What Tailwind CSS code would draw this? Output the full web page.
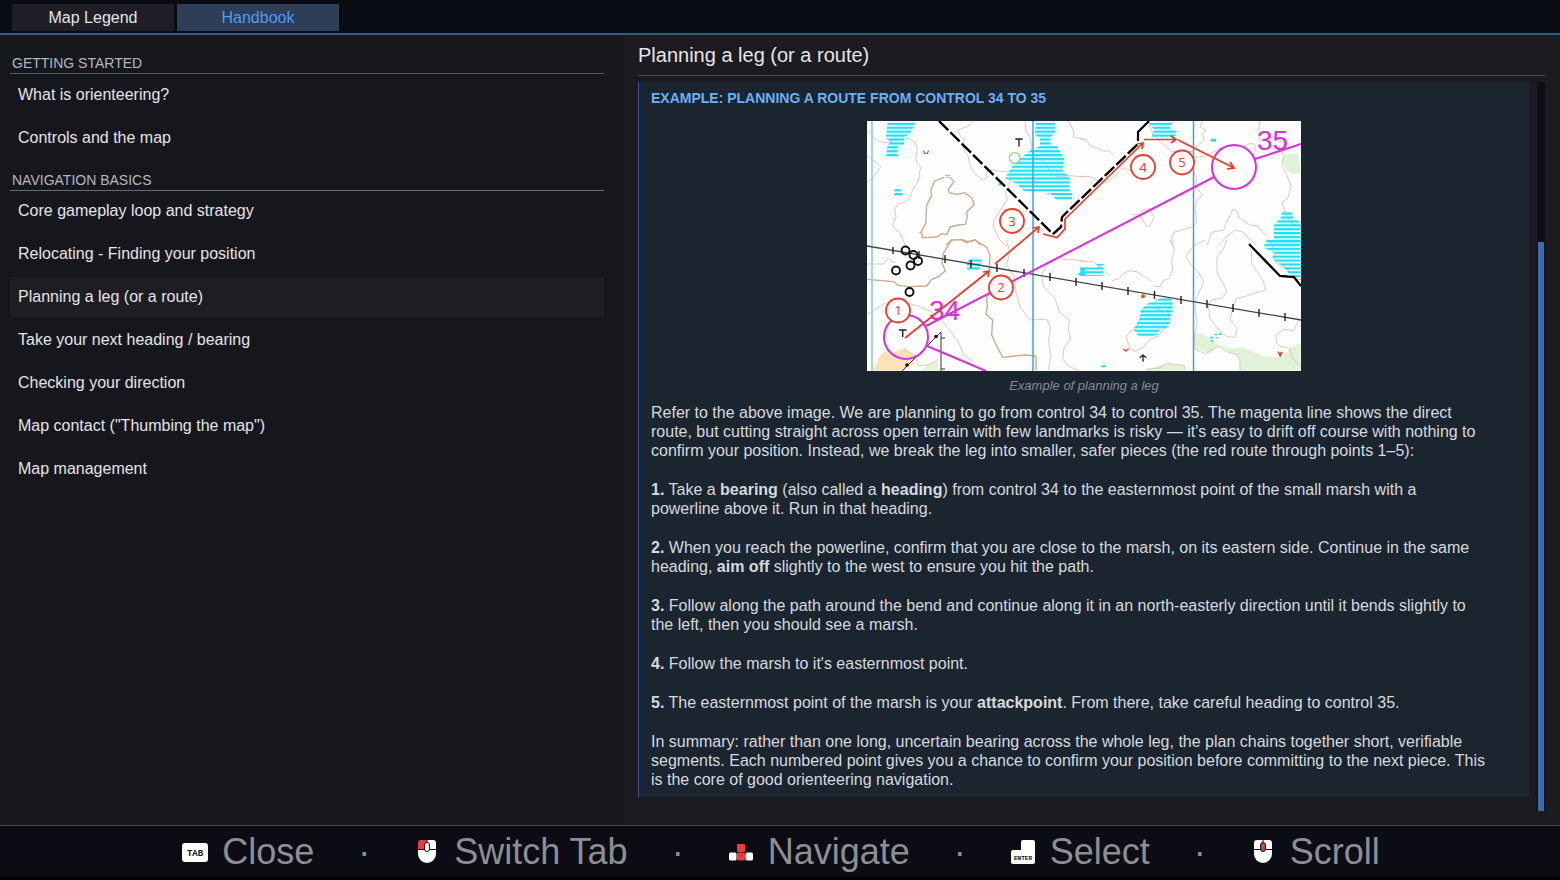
<!DOCTYPE html>
<html lang="en">
<head>
<meta charset="utf-8">
<meta name="viewport" content="width=device-width, initial-scale=1">
<title>Handbook</title>
<script src="https://cdn.jsdelivr.net/npm/@tailwindcss/browser@4"></script>
</head>
<body class="flex min-h-screen flex-col bg-[#16161b] font-['Liberation_Sans',Arial,sans-serif] text-base text-[#e4e4e7]">

<header class="border-b-2 border-[#2c5c8e] bg-[#0a0c14] px-3 pt-1 pb-[2px]">
  <nav class="flex gap-[3px]" aria-label="Sections">
    <button class="h-[27px] w-[162px] bg-[#1f1e27]">Map Legend</button>
    <button class="h-[27px] w-[162px] bg-[#2e3e56] text-[#4c9bf5]" aria-current="page">Handbook</button>
  </nav>
</header>

<main class="flex flex-1">
  <aside class="w-2/5 shrink-0 bg-[#16171c] pt-[18px] pr-5 pl-[10px]">
    <h2 class="border-b border-[#5b5b60] px-[2px] text-sm leading-5 text-[#b4b7bf]">GETTING STARTED</h2>
    <ul class="flex flex-col gap-[3px] pt-px">
      <li><button class="h-10 w-full px-2 text-left">What is orienteering?</button></li>
      <li><button class="h-10 w-full px-2 text-left">Controls and the map</button></li>
    </ul>
    <h2 class="mt-3 border-b border-[#6b6b70] px-[2px] text-sm leading-5 text-[#b4b7bf]">NAVIGATION BASICS</h2>
    <ul class="flex flex-col gap-[3px]">
      <li><button class="h-10 w-full px-2 text-left">Core gameplay loop and strategy</button></li>
      <li><button class="h-10 w-full px-2 text-left">Relocating - Finding your position</button></li>
      <li><button class="h-10 w-full bg-[#1d1d22] px-2 text-left" aria-current="true">Planning a leg (or a route)</button></li>
      <li><button class="h-10 w-full px-2 text-left">Take your next heading / bearing</button></li>
      <li><button class="h-10 w-full px-2 text-left">Checking your direction</button></li>
      <li><button class="h-10 w-full px-2 text-left">Map contact ("Thumbing the map")</button></li>
      <li><button class="h-10 w-full px-2 text-left">Map management</button></li>
    </ul>
  </aside>

  <section class="flex flex-1 flex-col bg-[#1c1b20] pr-[15px] pb-[14px] pl-[14px]">
    <h1 class="border-b border-[#4a4a4e] text-xl leading-10 text-[#e6e6e8]">Planning a leg (or a route)</h1>
    <div class="mt-[6px] flex flex-1 gap-2">
      <article class="mb-[14px] flex-1 border-l border-[#34589a] bg-[#1b2530] px-3 pt-[6px] pb-[7px]">
        <h2 class="text-sm leading-5 font-bold text-[#6cb0f5]">EXAMPLE: PLANNING A ROUTE FROM CONTROL 34 TO 35</h2>
        <figure class="mt-[13px] flex flex-col items-center">
          <svg class="w-[434px] max-w-full" viewBox="0 0 434 250" role="img" aria-label="Orienteering map with a route from control 34 to 35">
            <defs>
              <pattern id="marsh" width="12" height="11.7" patternUnits="userSpaceOnUse">
                <rect width="12" height="7" fill="#20e0f2"/>
              </pattern>
            </defs>
            <rect width="434" height="250" fill="#fefefe"/>
            <!-- terrain, north-west sheet -->
            <g transform="translate(-7 -6) scale(.333333)" fill="none" stroke-linejoin="round">
              <g stroke="#dccabb" stroke-width="3">
                <path d="M22 45L40 65 55 78 75 84 110 75 145 70 165 82 172 100 168 130 172 148 184 158 178 172 180 185 168 210 158 225 150 248 135 262 112 268 104 285 108 305 98 328 102 340 118 352 130 375 136 395"/>
                <path d="M22 120L62 155 38 190 22 205"/>
                <path d="M340 18L330 30 293 46 300 62 312 72 308 90 316 112 324 122 330 150 345 178 370 196 382 186 378 172 395 165 430 170 450 168 454 185 446 215 436 232 442 255 425 280 402 315 400 335 412 360 420 375 440 395"/>
                <path d="M495 18L498 50 512 70 515 110 525 125 545 135 560 150 575 175 590 186 630 182 675 186"/>
                <path d="M625 18L640 45 640 65 675 75"/>
              </g>
              <g stroke="#cba98a" stroke-width="4">
                <path d="M252 187L225 198 212 225 215 242 200 270 197 325 184 350 188 368 230 366 245 356 262 358 270 336 295 330 316 328 322 305 320 292 343 268 336 250 314 233 292 238 270 234 264 225 282 200 270 187"/>
                <path d="M258 390L275 375 308 374 322 380 345 375 362 390M178 352L186 352"/>
              </g>
              <path d="M254 181h18M256 187h14" stroke="#c9c4c0" stroke-width="4"/>
              <path fill="url(#marsh)" d="M83 22L165 22 162 36 155 44 150 58 132 66 132 90 112 95 114 128 78 128 82 92 90 80 78 68 80 45Z"/>
              <path fill="url(#marsh)" d="M104 222H120L130 243H102Z"/>
              <path fill="url(#marsh)" d="M528 20H586V54L572 66V92H590L612 130 610 170 630 185 628 222 636 236V256H590L572 236 492 228 468 205 434 190 460 150 508 108 540 94V72L524 58Z"/>
              <path fill="#20e0f2" d="M415 205h8v6h-8z"/>
              <path d="M190 107l4 8h8l4-8" stroke="#d5623e" stroke-width="4"/>
              <circle cx="464" cy="129" r="16" stroke="#86e070" stroke-width="4"/>
              <path d="M466 72H488M477 72V95" stroke="#222" stroke-width="4"/>
            </g>
            <!-- terrain, north-east sheet -->
            <g transform="translate(213 -6) scale(.333333)" fill="none" stroke-linejoin="round">
              <path fill="#e0f3da" d="M610 118L655 115 662 175 640 178 618 165 608 140Z"/>
              <g stroke="#dccabb" stroke-width="3">
                <path d="M0 70L18 74 30 92 50 98 75 110 88 105 100 118M0 184L30 185 55 198 80 202 100 188 112 176 125 160 160 168"/>
                <path d="M205 22L220 60 250 88 275 108 310 125 340 105 352 92 372 75 368 55 378 45 360 36 368 18M300 120L345 128 380 122 420 100 460 92 490 95 512 84 524 88 528 110"/>
                <path d="M540 18L535 50 540 78 562 68 590 66 600 80 612 82 606 105 610 125 606 150 620 180 634 215 622 252 605 260 618 300 634 325 650 330"/>
                <path d="M340 170L350 190 346 215 368 240 352 252 345 280 350 320 340 335 282 352 275 370 280 390"/>
                <path d="M155 300L185 296 188 285 210 280 222 308 212 330 200 334 190 318 182 304"/>
                <path d="M382 390L395 352 432 345 440 320 452 298 458 282 472 290 476 308 510 330 530 332 548 352 562 362M418 390L438 366 466 345 490 352 515 378 530 390"/>
              </g>
              <path fill="url(#marsh)" d="M205 22L278 22 270 40 290 48 284 66H215L222 44Z"/>
              <path fill="#20e0f2" d="M392 71h16v9h-16z"/>
              <path fill="url(#marsh)" d="M606 288H634L640 310 662 322V390H556L582 370V330L602 310Z"/>
            </g>
            <!-- terrain, south-west sheet -->
            <g transform="translate(-7 119) scale(.333333)" fill="none" stroke-linejoin="round">
              <path fill="#fce2b8" d="M40 392L60 345 84 330 105 335 140 320 144 335 168 348 160 372 130 392Z"/>
              <path fill="#e5f3d8" d="M205 370L232 362 238 392H185Z"/>
              <g stroke="#dccabb" stroke-width="3">
                <path d="M22 222L75 190 110 182 165 195 215 215 245 240 268 270 292 300 312 345 340 365"/>
                <path d="M22 72H70L85 55 105 70M132 330L165 345 175 378 210 374 235 358"/>
                <path d="M438 0L450 35 440 75 462 110 468 155 480 200 510 240 560 238 572 265 566 300 572 350 565 390M675 62L590 56 580 65 560 75 545 105 550 140 585 175 598 215 628 240 625 270 632 295 612 325 608 355 620 375 655 392"/>
              </g>
              <g stroke="#cba98a" stroke-width="4">
                <path d="M22 118L100 125 115 136 150 140 200 138 215 118 235 110 256 92 246 70 250 40 275 0M305 0L320 8 345 0 380 22 390 45 388 90"/>
                <path d="M395 155L380 170 382 200 378 222 398 240 395 285 410 318 428 352 495 345 528 348 528 390"/>
              </g>
              <path fill="url(#marsh)" d="M328 53H352L366 60 358 92H322L320 72Z"/>
              <path fill="#20e0f2" d="M662 86h13v7h-13zM655 99h20v7h-20z"/>
            </g>
            <!-- terrain, south-east sheet -->
            <g transform="translate(213 119) scale(.333333)" fill="none" stroke-linejoin="round">
              <path fill="#e0f3d8" d="M342 285L358 278 400 300 415 315 460 326 490 322 550 348 605 352 630 325 662 310V392H480L478 352 420 318 388 340 345 325ZM196 392L255 370 315 378 312 392Z"/>
              <g stroke="#dccabb" stroke-width="3">
                <path d="M270 0L284 30 275 60 278 90 268 115 250 122 240 140 222 138M0 66L40 64 80 98 90 104M97 122L120 115 130 100 150 92 172 96 215 124"/>
                <path d="M375 0L340 18 318 50 330 70 352 92 372 125 358 155 345 185 346 215 352 245 344 285 342 325 375 342 415 318 440 335 472 345 480 360V392"/>
                <path d="M440 0L430 28 410 52 412 100 430 130 440 155 425 175 396 180 385 195 390 235 415 268 440 290 465 292 472 265 450 240 458 205 470 175 500 168 530 158 558 150 548 120 532 95 515 70 515 30"/>
                <path d="M275 192L262 210 272 245 250 270 235 288 210 298 190 322 165 334 150 325 138 290 150 275 165 270 180 240 195 200 225 205 258 215M655 242L640 272 612 268 588 285 590 310 600 318 630 325 635 352 662 378M196 388L240 384 260 370 312 376 315 390"/>
                <path d="M570 0L590 70 640 100"/>
              </g>
              <path fill="url(#marsh)" d="M560 0H662V120L640 116 610 80 575 55 585 40 550 22Z"/>
              <path fill="url(#marsh)" d="M0 82H50V72H70V108H0Z"/>
              <path fill="url(#marsh)" d="M245 173L270 173 278 186V215L268 235 270 245 258 268 240 270 230 284 214 290H178L160 268 180 235 182 210 205 190Z"/>
              <g fill="#20e0f2"><path d="M64 376h14v6H64zM390 290h10v5h-10zM403 281h8v5h-8zM417 280h8v5h-8zM392 300h7v5h-7zM408 291h6v4h-6z"/></g>
              <circle cx="189" cy="169" r="6" fill="#d8551f"/>
              <path d="M130 326l8 7 8-7M594 335l7 14 6-14M601 349v-12" stroke="#c9562f" stroke-width="4"/>
              <path d="M189 365V345M179 353L189 345 199 353" stroke="#222" stroke-width="4"/>
            </g>
            <!-- north lines -->
            <path d="M5 0V250" stroke="#8fcdec" stroke-width="1.7"/>
            <path d="M166 0V250M326.500 0V250" stroke="#3aa7de" stroke-width="1.500"/>
            <!-- powerline -->
            <g stroke="#444" fill="none">
              <path d="M0 125L434 199" stroke-width="1.300"/>
              <path d="M26 126V133M52 130V138M78 134V142M104 139V147M130 143V151M157 148V156M183 152V160M209 157V165M235 161V169M261 166V174M287.500 170V178M314 175V183M340 179V187M366 183V191M392 188V196M418 192V200" stroke="#222" stroke-width="1.400"/>
            </g>
            <!-- paths, boulders and fences -->
            <path d="M72 0L186 113" fill="none" stroke="#000" stroke-width="2.400" stroke-dasharray="13 3"/>
            <path d="M186 113L194 106 195 96 271 23" fill="none" stroke="#000" stroke-width="2.400" stroke-dasharray="13 3"/>
            <path d="M271 20V11L282 0" fill="none" stroke="#000" stroke-width="2.200"/>
            <path d="M382 123L413 155 427 156 434 165" fill="none" stroke="#000" stroke-width="2.300"/>
            <g fill="none" stroke="#111" stroke-width="1.900">
              <circle cx="38.500" cy="129.500" r="4"/><circle cx="46.500" cy="134" r="4"/><circle cx="51" cy="140" r="4"/>
              <circle cx="43.500" cy="144.500" r="4"/><circle cx="29" cy="149.500" r="4"/><circle cx="42.500" cy="171" r="4"/>
            </g>
            <path d="M35 250L74 211M74 211V250M74 217H78M74 248H78" fill="none" stroke="#333" stroke-width="1"/>
            <path d="M32 209H39.500M35.700 209V216" fill="none" stroke="#222" stroke-width="1.500"/>
            <circle cx="40" cy="244" r="1.800" fill="#111"/><circle cx="69" cy="215.500" r="1.800" fill="#111"/>
            <!-- course -->
            <g fill="none" stroke="#dc2fdc" stroke-width="2">
              <circle cx="39" cy="216" r="22"/><circle cx="367" cy="46" r="22"/>
              <path d="M59 205L347 56M388 38L434 23M60 225L119 250"/>
            </g>
            <g fill="#dc2fdc" font-family="Liberation Sans, Arial, sans-serif" font-size="28">
              <text x="62" y="199">34</text><text x="390" y="29">35</text>
            </g>
            <!-- planned route -->
            <g fill="none" stroke="#f03826" stroke-width="1.700">
              <path d="M38 217L122 150M116 151L122 150 121 156M128 143L172 106M166 107L172 106 171 112"/>
              <path d="M176 113L190 116.500 198 108V98L276 22M270 23L276 22 275 28M277 18.500H309M304 15L309 18.500 304 22M311 19L367 47M363 41L367 47 360 48"/>
            </g>
            <g fill="#fff" stroke="#f03826" stroke-width="1.800">
              <circle cx="31" cy="189.500" r="12"/><circle cx="134" cy="166.500" r="12"/><circle cx="145" cy="100" r="12"/>
              <circle cx="276" cy="46" r="12"/><circle cx="315" cy="41.500" r="12"/>
            </g>
            <g fill="#f03826" font-family="Open Sans, Noto Sans, sans-serif" font-size="13" text-anchor="middle">
              <text x="31" y="194">1</text><text x="134" y="171">2</text><text x="145" y="105">3</text>
              <text x="276" y="51">4</text><text x="315" y="46">5</text>
            </g>
          </svg>
          <figcaption class="mt-[5px] text-[13px] leading-5 text-[#858b92] italic">Example of planning a leg</figcaption>
        </figure>
        <div class="mt-[7px] flex flex-col gap-5 leading-[19px] text-[#d6dade]">
          <p>Refer to the above image. We are planning to go from control 34 to control 35. The magenta line shows the direct<br>route, but cutting straight across open terrain with few landmarks is risky — it's easy to drift off course with nothing to<br>confirm your position. Instead, we break the leg into smaller, safer pieces (the red route through points 1–5):</p>
          <p><b>1.</b> Take a <b>bearing</b> (also called a <b>heading</b>) from control 34 to the easternmost point of the small marsh with a<br>powerline above it. Run in that heading.</p>
          <p><b>2.</b> When you reach the powerline, confirm that you are close to the marsh, on its eastern side. Continue in the same<br>heading, <b>aim off</b> slightly to the west to ensure you hit the path.</p>
          <p><b>3.</b> Follow along the path around the bend and continue along it in an north-easterly direction until it bends slightly to<br>the left, then you should see a marsh.</p>
          <p><b>4.</b> Follow the marsh to it's easternmost point.</p>
          <p><b>5.</b> The easternmost point of the marsh is your <b>attackpoint</b>. From there, take careful heading to control 35.</p>
          <p>In summary: rather than one long, uncertain bearing across the whole leg, the plan chains together short, verifiable<br>segments. Each numbered point gives you a chance to confirm your position before committing to the next piece. This<br>is the core of good orienteering navigation.</p>
        </div>
      </article>
      <div class="flex w-2 flex-col bg-[#0e0e17] px-px">
        <div class="grow-[22]"></div>
        <div class="grow-[78] bg-[#3a6eb0]"></div>
      </div>
    </div>
  </section>
</main>

<footer class="flex h-[55px] items-center justify-center gap-11 border-t border-b-3 border-t-[#48484c] border-b-black bg-[#0c0d14] pl-[2px] text-4xl leading-[50px] text-[#8e8f95]">
  <button class="flex items-center gap-[14px]">
    <svg class="size-[26px]" viewBox="0 0 26 26" aria-hidden="true"><rect y="4" width="26" height="19" rx="3" fill="#fff"/><text x="13" y="17" text-anchor="middle" font-family="Liberation Mono, monospace" font-weight="bold" font-size="9" fill="#111">TAB</text></svg>
    Close
  </button>
  <span aria-hidden="true">·</span>
  <button class="flex items-center gap-[14px]">
    <svg class="size-[26px]" viewBox="0 0 26 26" aria-hidden="true"><path d="M13 1h6q3 0 3 3v6H13z" fill="#fff"/><path d="M4 10V4q0-3 3-3h6v9z" fill="#f0393f"/><path d="M4 11h18v4a9 9 0 0 1-18 0z" fill="#fff"/><path d="M13 1v3M4 10.500h18" stroke="#111" stroke-width="1"/><rect x="10.500" y="3.500" width="5" height="9" rx="2.500" fill="#fff" stroke="#111"/></svg>
    Switch Tab
  </button>
  <span aria-hidden="true">·</span>
  <button class="flex items-center gap-[14px]">
    <svg class="size-[26px]" viewBox="0 0 26 26" aria-hidden="true"><g fill="#f0393f"><rect x="9" y="5" width="8" height="8" rx="1"/><rect x="9" y="13.500" width="8" height="8" rx="1"/></g><g fill="#fff"><rect x="1" y="13.500" width="7.500" height="8" rx="1.500"/><rect x="17.500" y="13.500" width="7.500" height="8" rx="1.500"/></g></svg>
    Navigate
  </button>
  <span aria-hidden="true">·</span>
  <button class="flex items-center gap-[14px]">
    <svg class="size-[26px]" viewBox="0 0 26 26" aria-hidden="true"><path d="M13 1h10q2 0 2 2v20q0 2-2 2H3q-2 0-2-2V13q0-2 2-2h8V3q0-2 2-2z" fill="#fff"/><text x="13" y="21" text-anchor="middle" font-family="Liberation Mono, monospace" font-weight="bold" font-size="6" fill="#111">ENTER</text></svg>
    Select
  </button>
  <span aria-hidden="true">·</span>
  <button class="flex items-center gap-[14px]">
    <svg class="size-[26px]" viewBox="0 0 26 26" aria-hidden="true"><path d="M4 10V4q0-3 3-3h12q3 0 3 3v6zM4 11h18v4a9 9 0 0 1-18 0z" fill="#fff"/><path d="M13 1v3M4 10.500h18" stroke="#111"/><rect x="10.500" y="3.500" width="5" height="9" rx="2.500" fill="#c4474c" stroke="#111"/></svg>
    Scroll
  </button>
</footer>
</body>
</html>
